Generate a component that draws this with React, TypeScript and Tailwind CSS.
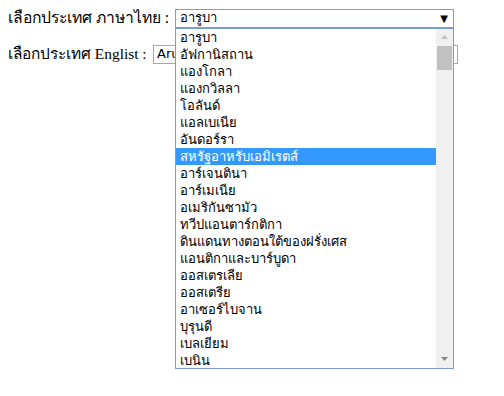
const countries = [
  "อารูบา",
  "อัฟกานิสถาน",
  "แองโกลา",
  "แองกวิลลา",
  "โอลันด์",
  "แอลเบเนีย",
  "อันดอร์รา",
  "สหรัฐอาหรับเอมิเรตส์",
  "อาร์เจนตินา",
  "อาร์เมเนีย",
  "อเมริกันซามัว",
  "ทวีปแอนตาร์กติกา",
  "ดินแดนทางตอนใต้ของฝรั่งเศส",
  "แอนติกาและบาร์บูดา",
  "ออสเตรเลีย",
  "ออสเตรีย",
  "อาเซอร์ไบจาน",
  "บุรุนดี",
  "เบลเยียม",
  "เบนิน",
]

const serif = "font-['Times_New_Roman','Liberation_Serif',serif]"
const sans = "font-['Tahoma','DejaVu_Sans','Noto_Sans',sans-serif]"

function App() {
  return (
    <div className={`relative min-h-[396px] bg-white px-2 pt-[8px] text-[15.7px] text-black ${serif}`}>
      <div className="flex h-[20px] items-center">
        <span className="w-[167px] shrink-0 whitespace-nowrap">เลือกประเทศ ภาษาไทย :</span>
        <div className="relative">
          <div className={`flex h-[19px] w-[279px] items-center justify-between border border-[#7a9ad8] pl-[4px] pr-[5px] text-[13px] ${sans}`}>
            <span>อารูบา</span>
            <span className="text-[10px]">▼</span>
          </div>
          <div className={`absolute left-0 top-[19px] z-10 flex h-[341px] w-[279px] border border-[#7a9ad8] bg-white text-[13px] ${sans}`}>
            <ul className="flex-1">
              {countries.map((c, i) => (
                <li
                  key={c}
                  className={`h-[17px] pl-[4px] leading-[17px] ${i === 7 ? "bg-[#3399ff] text-white" : ""}`}
                >
                  {c}
                </li>
              ))}
            </ul>
            <div className="flex w-[17px] flex-col bg-[#f0f0f0]">
              <div className="flex h-[17px] items-center justify-center">
                <svg width="7" height="4" viewBox="0 0 7 4">
                  <path d="M0 4 L3.5 0 L7 4 Z" fill="#c2c2c2" />
                </svg>
              </div>
              <div className="mx-[1px] h-[24px] bg-[#c1c1c1]" />
              <div className="flex-1" />
              <div className="flex h-[17px] items-center justify-center">
                <svg width="7" height="4" viewBox="0 0 7 4">
                  <path d="M0 0 L7 0 L3.5 4 Z" fill="#8a8a8a" />
                </svg>
              </div>
            </div>
          </div>
        </div>
      </div>
      <div className="mt-[16px] flex h-[20px] items-center">
        <span className="w-[145px] shrink-0 whitespace-nowrap text-[15.4px]">เลือกประเทศ Englist :</span>
        <div className={`flex h-[19px] w-[305px] items-center border border-[#a9a9a9] pl-[3px] text-[13px] ${sans}`}>
          <span>Aruba</span>
        </div>
      </div>
    </div>
  )
}

export default App
